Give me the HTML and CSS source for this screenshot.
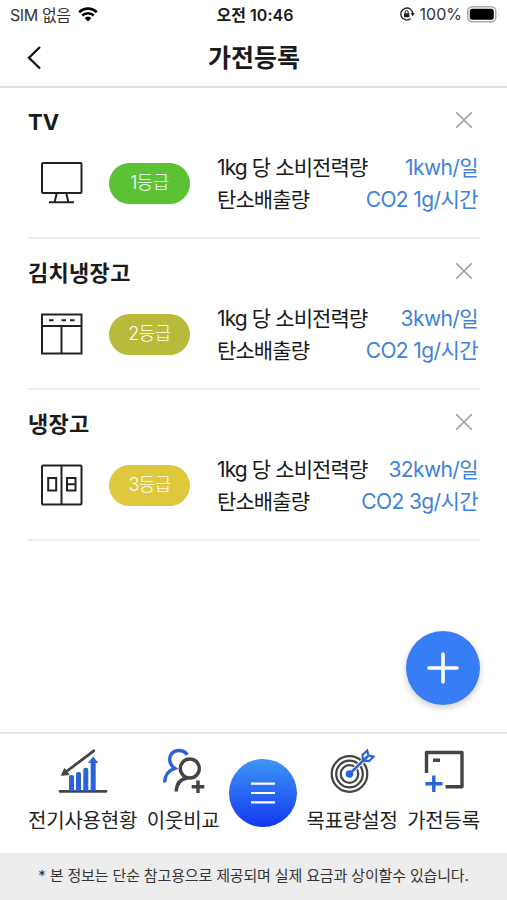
FILE: index.html
```html
<!DOCTYPE html>
<html lang="ko">

<head>
  <meta charset="utf-8">
  <meta content="width=device-width, initial-scale=1.0" name="viewport">
  <title>가전등록</title>
  <link rel="stylesheet" href="styles.css">
</head>

<body>
  <div class="app">
    <div class="status-bar">
      <div class="status-left">
        <span class="carrier">SIM 없음</span>
        <svg class="wifi" width="20" height="15" viewBox="0 0 20 15">
          <path d="M1.2 5.2a12.6 12.6 0 0 1 17.6 0M4.3 8.5a8.2 8.2 0 0 1 11.4 0" fill="none" stroke="#000" stroke-width="2.6" />
          <path d="M6.6 11a5 5 0 0 1 6.8 0L10 14.5z" fill="#000" />
        </svg>
      </div>
      <span class="clock">오전 10:46</span>
      <div class="status-right">
        <svg width="15" height="14" viewBox="0 0 15 14">
          <path d="M10.7 11.6A6 6 0 1 1 12.8 6.4" fill="none" stroke="#222" stroke-width="1.3" />
          <path d="M10.6 6h4.2l-2.1 3.2z" fill="#222" />
          <rect x="4" y="6.2" width="5.4" height="4.1" rx=".6" fill="#222" />
          <path d="M5.2 6.4V5a1.5 1.5 0 0 1 3 0v1.4" fill="none" stroke="#222" />
        </svg>
        <span class="percent">100%</span>
        <svg width="33" height="17" viewBox="0 0 33 17">
          <rect x=".8" y=".8" width="28" height="15" rx="4.5" fill="#fff" stroke="#aaa" stroke-width="1.5" />
          <rect x="2.8" y="2.8" width="24" height="11" rx="2.5" fill="#000" />
          <path d="M31 6.2q1.6 2.2 0 4.4z" fill="#aaa" />
        </svg>
      </div>
    </div>

    <header class="header">
      <svg class="back" width="15" height="24" viewBox="0 0 15 24">
        <path d="M13 1L2 11.8l11 10.7" fill="none" stroke="#111" stroke-width="2.3" />
      </svg>
      <h1>가전등록</h1>
    </header>

    <main class="list">
      <section class="item">
        <div class="item-head">
          <h2 class="latin">TV</h2>
          <svg class="close" width="18" height="18" viewBox="0 0 18 18">
            <path d="M1.2 1.2l15.6 15.6M16.8 1.2L1.2 16.8" stroke="#999" stroke-width="1.6" />
          </svg>
        </div>
        <div class="item-body">
          <svg class="device" width="42" height="42" viewBox="0 0 42 42" fill="none" stroke="#222" stroke-width="2">
            <rect x="1" y="1" width="39.5" height="30" rx="1" />
            <path d="M15.8 31l-2.3 9.5M25.2 31l2.3 9.5M8 40.3h25" />
          </svg>
          <span class="grade grade-1">1등급</span>
          <dl class="info">
            <div class="info-row">
              <dt>1kg 당 소비전력량</dt>
              <dd>1kwh/일</dd>
            </div>
            <div class="info-row">
              <dt>탄소배출량</dt>
              <dd>CO2 1g/시간</dd>
            </div>
          </dl>
        </div>
      </section>

      <section class="item">
        <div class="item-head">
          <h2>김치냉장고</h2>
          <svg class="close" width="18" height="18" viewBox="0 0 18 18">
            <path d="M1.2 1.2l15.6 15.6M16.8 1.2L1.2 16.8" stroke="#999" stroke-width="1.6" />
          </svg>
        </div>
        <div class="item-body">
          <svg class="device" width="42" height="42" viewBox="0 0 42 42" fill="none" stroke="#222" stroke-width="2">
            <path d="M1 1.5h39.5v39H1zM1 13h39.5M20.5 13v27.5M8 7.3h4.5M20.5 7.3H25M29 7.3h4.5" />
          </svg>
          <span class="grade grade-2">2등급</span>
          <dl class="info">
            <div class="info-row">
              <dt>1kg 당 소비전력량</dt>
              <dd>3kwh/일</dd>
            </div>
            <div class="info-row">
              <dt>탄소배출량</dt>
              <dd>CO2 1g/시간</dd>
            </div>
          </dl>
        </div>
      </section>

      <section class="item">
        <div class="item-head">
          <h2>냉장고</h2>
          <svg class="close" width="18" height="18" viewBox="0 0 18 18">
            <path d="M1.2 1.2l15.6 15.6M16.8 1.2L1.2 16.8" stroke="#999" stroke-width="1.6" />
          </svg>
        </div>
        <div class="item-body">
          <svg class="device" width="42" height="42" viewBox="0 0 42 42" fill="none" stroke="#222" stroke-width="2">
            <rect x="1" y="1.5" width="39.5" height="39" rx="1" />
            <path d="M20.5 1.5v39M7.2 14h8v12.5h-8zM26 14h8.5v12.5H26zM26 20.2h8.5" />
          </svg>
          <span class="grade grade-3">3등급</span>
          <dl class="info">
            <div class="info-row">
              <dt>1kg 당 소비전력량</dt>
              <dd>32kwh/일</dd>
            </div>
            <div class="info-row">
              <dt>탄소배출량</dt>
              <dd>CO2 3g/시간</dd>
            </div>
          </dl>
        </div>
      </section>
    </main>

    <button class="add-button" aria-label="추가">
      <svg width="34" height="34" viewBox="0 0 34 34">
        <path d="M17 3v28M3 17h28" stroke="#fff" stroke-width="3.6" stroke-linecap="round" />
      </svg>
    </button>

    <nav class="tabs">
      <a class="tab">
        <svg width="50" height="46" viewBox="0 0 50 46">
          <path d="M2 43.3h46M6.5 25L35.8 2.8" stroke="#444" stroke-width="2.8" stroke-linecap="round" />
          <path d="M3.5 27.3l3-6.7 4.6 6z" fill="#444" stroke="#444" stroke-linejoin="round" />
          <path d="M11 43V29q0-2 2-2h1q2 0 2 2v14zM18 43V26q0-2 2-2h1q2 0 2 2v17zM25.3 43V21.8q0-2 2-2h1q2 0 2 2V43zM32.7 43V15H30l5.2-6.5 5.2 6.5h-2.7v28z" fill="#2b62dc" />
        </svg>
        <span>전기사용현황</span>
      </a>
      <a class="tab">
        <svg width="44" height="46" viewBox="0 0 44 46" fill="none" stroke-width="3.4">
          <path d="M3.6 34.5C3.8 27.5 7 22.5 13.8 20.3 10.5 18 8.7 15 8.7 11.5 8.7 6 12.5 2.5 18 2.5c3.5 0 6.3 1.3 8.3 4.3" stroke="#2b62dc" />
          <circle cx="28.8" cy="20.5" r="9.5" stroke="#444" />
          <path d="M15.2 43.5C15.500 36 19 31 26.500 30M37 32.500V45M30.700 38.700h12.600" stroke="#444" />
        </svg>
        <span>이웃비교</span>
      </a>
      <button class="menu-button" aria-label="메뉴">
        <svg width="26" height="24" viewBox="0 0 26 24">
          <path d="M1 2.7h24M1 12h24M1 21.3h24" stroke="#fff" stroke-width="2.2" />
        </svg>
      </button>
      <a class="tab">
        <svg width="46" height="46" viewBox="0 0 46 46" fill="none">
          <g stroke="#444" stroke-width="2.2">
            <circle cx="20.5" cy="26" r="17.8" />
            <circle cx="20.5" cy="26" r="13.3" />
            <circle cx="20.5" cy="26" r="8.8" />
          </g>
          <path d="M24 22.5L36 11" stroke="#fff" stroke-width="4.5" />
          <circle cx="20.5" cy="26" r="3.8" fill="#2b62dc" />
          <path d="M20.5 26L39 8" stroke="#2b62dc" stroke-width="2.6" />
          <path d="M34 12.5L33.5 7l4.7-4.5 1.3 5 5.2 1-4.7 4.7z" stroke="#2b62dc" stroke-width="2.2" />
        </svg>
        <span>목표량설정</span>
      </a>
      <a class="tab">
        <svg width="40" height="46" viewBox="0 0 40 46" fill="none" stroke-width="3.4">
          <path d="M2.5 25V4.5H38v34.3H21.5M9 12.3h7" stroke="#444" stroke-linejoin="round" />
          <path d="M9.8 27.5V44M1.5 35.7h17" stroke="#2b62dc" />
        </svg>
        <span>가전등록</span>
      </a>
    </nav>

    <footer class="notice">* 본 정보는 단순 참고용으로 제공되며 실제 요금과 상이할수 있습니다.</footer>
  </div>
</body>

</html>
```
FILE: styles.css
```css
*,
*::before,
*::after {
  box-sizing: border-box;
}

body {
  margin: 0;
  background: #fff;
  color: #1a1a1a;
  font-family: "Inter", "Noto Sans CJK KR", sans-serif;
}

h1,
h2,
dl,
dd {
  margin: 0;
}

button {
  border: 0;
  padding: 0;
  cursor: pointer;
}

svg {
  display: block;
  flex: none;
}

.app {
  position: relative;
  display: flex;
  flex-direction: column;
  height: 900px;
  overflow: hidden;
  white-space: nowrap;
}

.status-bar {
  display: grid;
  grid-template-columns: 1fr auto 1fr;
  align-items: center;
  height: 28px;
  padding: 0 7px 0 10px;
  font-size: 16px;
}

.status-left,
.status-right {
  display: flex;
  align-items: center;
  color: #333;
}

.status-left {
  gap: 7px;
}

.status-right {
  justify-content: flex-end;
  gap: 5px;
}

.carrier {
  letter-spacing: -0.4px;
}

.clock {
  font-weight: 600;
}

.header {
  display: flex;
  align-items: center;
  height: 60px;
  padding: 2px 27px 0;
  border-bottom: 2px solid #dedede;
}

.header h1 {
  flex: 1;
  margin-right: 14px;
  text-align: center;
  font-size: 25px;
  line-height: 36px;
}

.list {
  flex: 1;
  padding: 0 27px 0 28px;
}

.item {
  height: 151px;
  padding-top: 14px;
  border-bottom: 2px solid #ececec;
}

.item-head {
  display: flex;
  align-items: center;
  justify-content: space-between;
  height: 36px;
  padding-right: 7px;
}

.item-head h2 {
  font-size: 22px;
  letter-spacing: 0.3px;
}

.item-head .latin {
  padding-top: 4px;
  letter-spacing: 0;
}

.item-body {
  display: flex;
  align-items: center;
  height: 64px;
  margin-top: 13px;
  padding-left: 13px;
}

.grade {
  flex: none;
  width: 81px;
  height: 41px;
  margin: 0 27px 0 26px;
  border-radius: 21px;
  color: #fff;
  font-size: 18px;
  font-weight: 300;
  line-height: 40px;
  text-align: center;
  letter-spacing: -0.6px;
}

.grade-1 {
  background: #5bc236;
}

.grade-2 {
  background: #b9b93a;
}

.grade-3 {
  background: #dfc83e;
}

.info {
  flex: 1;
  padding: 2px 2px 0 0;
  font-size: 21px;
  line-height: 32px;
  letter-spacing: -0.6px;
}

.info-row {
  display: flex;
  justify-content: space-between;
}

.info dt {
  letter-spacing: -0.9px;
}

.info dd {
  color: #3f82dc;
}

.add-button {
  position: absolute;
  right: 27px;
  bottom: 195px;
  display: flex;
  align-items: center;
  justify-content: center;
  width: 74px;
  height: 74px;
  border-radius: 50%;
  background: #377df5;
  box-shadow: 0 3px 7px rgba(0, 0, 0, 0.2);
}

.tabs {
  display: flex;
  justify-content: space-between;
  height: 121px;
  padding: 14px 27px 0 28px;
  border-top: 2px solid #e4e4e4;
}

.tab {
  display: flex;
  flex-direction: column;
  align-items: center;
  gap: 11px;
  color: #222;
  font-size: 20px;
  line-height: 32px;
  letter-spacing: -0.2px;
}

.menu-button {
  display: flex;
  align-items: center;
  justify-content: center;
  width: 68px;
  height: 68px;
  margin-top: 11px;
  border-radius: 50%;
  background: linear-gradient(#3e96f5, #1238f2);
}

.notice {
  height: 47px;
  background: #ededed;
  color: #333;
  font-size: 15px;
  line-height: 45px;
  text-align: center;
  letter-spacing: -0.15px;
}
```
